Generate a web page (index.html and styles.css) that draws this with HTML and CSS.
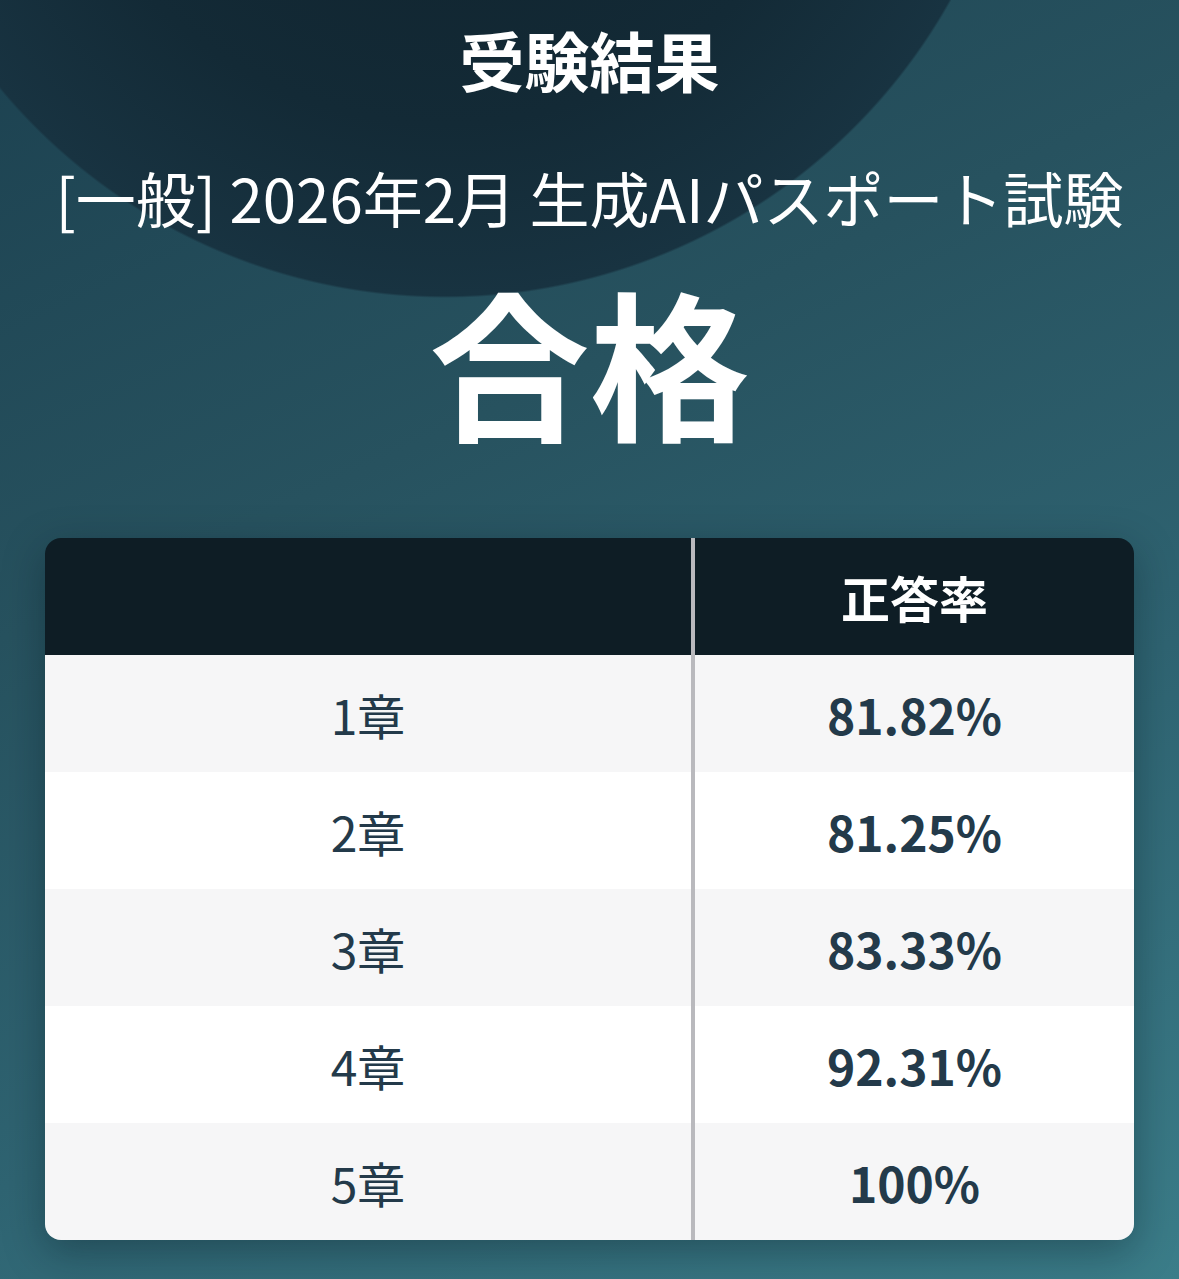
FILE: index.html
```html
<!DOCTYPE html>
<html lang="ja">
<head>
<meta charset="utf-8">
<title>受験結果</title>
<link rel="stylesheet" href="styles.css">
</head>
<body>
<main class="page">
  <h1 class="title">受験結果</h1>
  <p class="exam">[一般] 2026年2月 生成AIパスポート試験</p>
  <p class="result">合格</p>
  <section class="card">
    <div class="cell head label"></div>
    <div class="cell head rate">正答率</div>

    <div class="cell odd label">1章</div>
    <div class="cell odd rate">81.82%</div>

    <div class="cell even label">2章</div>
    <div class="cell even rate">81.25%</div>

    <div class="cell odd label">3章</div>
    <div class="cell odd rate">83.33%</div>

    <div class="cell even label">4章</div>
    <div class="cell even rate">92.31%</div>

    <div class="cell odd label">5章</div>
    <div class="cell odd rate">100%</div>
  </section>
</main>
</body>
</html>
```
FILE: styles.css
```css
html, body {
  margin: 0;
  padding: 0;
}

body {
  width: 1179px;
  height: 1279px;
  overflow: hidden;
  font-family: "Noto Sans CJK JP", "Noto Sans", sans-serif;
  background:
    radial-gradient(circle 580px at 445px -282px, #0f212b 0%, #132a36 70%, #183341 99.6%, rgba(24,51,65,0) 100%),
    linear-gradient(155deg, #1c4150 0%, #27525f 35%, #2f6472 65%, #3b7d89 100%);
}

.page {
  display: flex;
  flex-direction: column;
  align-items: center;
  padding: 21px 45px 0;
}

.title {
  margin: 0;
  font-size: 65px;
  line-height: 76px;
  font-weight: 700;
  color: #ffffff;
}

.exam {
  margin: 64px 0 0;
  font-size: 60px;
  line-height: 72px;
  font-weight: 400;
  color: #ffffff;
  white-space: nowrap;
}

.result {
  margin: 36px 0 0;
  font-size: 160px;
  line-height: 180px;
  font-weight: 700;
  color: #ffffff;
}

.card {
  margin-top: 89px;
  width: 1089px;
  display: grid;
  grid-template-columns: 650px 1fr;
  grid-auto-rows: 117px;
  border-radius: 16px;
  overflow: hidden;
  box-shadow: 0 12px 40px rgba(5, 20, 28, 0.35);
}

.cell {
  display: flex;
  align-items: center;
  justify-content: center;
  font-size: 48px;
  color: #233a4a;
}

.label {
  border-right: 4px solid #b9b9bd;
}

.head {
  background: #0e1d25;
  color: #ffffff;
  font-weight: 700;
  font-size: 49px;
}

.odd {
  background: #f6f6f7;
}

.even {
  background: #ffffff;
}

.rate {
  font-weight: 700;
}

.label:not(.head) {
  font-weight: 400;
}
```
